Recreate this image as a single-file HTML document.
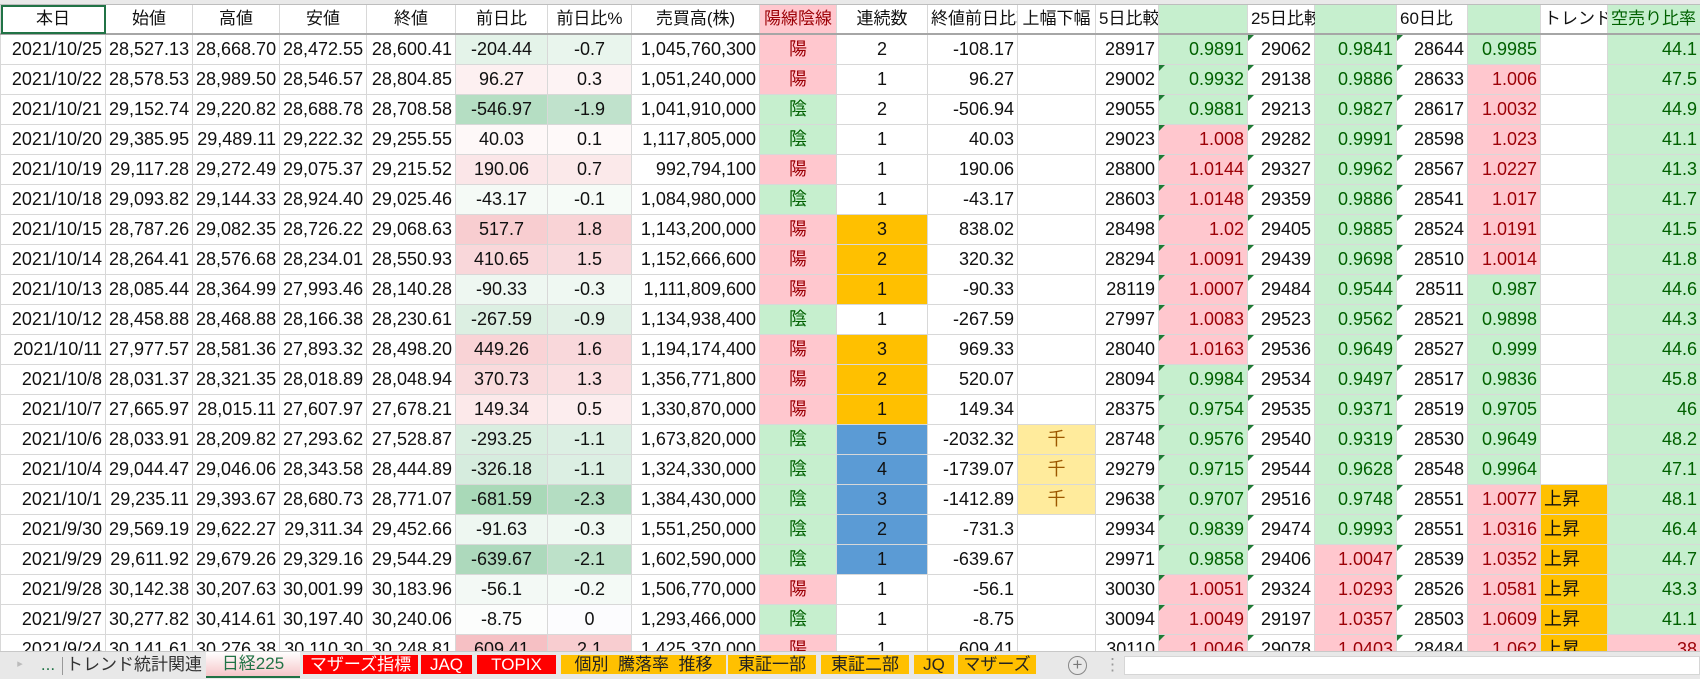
<!DOCTYPE html>
<html><head><meta charset="utf-8">
<style>
*{box-sizing:border-box;margin:0;padding:0}
body{width:1700px;height:679px;overflow:hidden;background:#fff;font-family:"Liberation Sans","Noto Sans CJK JP",sans-serif;font-size:18px;color:#111;position:relative}
.strip{position:absolute;left:0;top:0;width:1700px;height:5px;background:#e9e9e9;border-bottom:1px solid #bdbdbd}
table{position:absolute;left:0;top:5px;border-collapse:collapse;table-layout:fixed;width:1700px}
td{border:1px solid #d8d8d8;height:30px;padding:0 3px;text-align:right;white-space:nowrap;overflow:hidden;position:relative;line-height:28px}
tr.h td{height:29px;text-align:center;border-bottom:2px solid #a6a6a6;border-top:none;font-size:17px}
tr.h td.l{text-align:left;padding-left:3px}
.c{text-align:center!important}
.g{background:#c6efce;color:#006100}
.r{background:#ffc7ce;color:#9c0006}
.o{background:#ffc000;color:#111}
.b{background:#5b9bd5;color:#111}
.y{background:#ffeb9c;color:#9c5700;text-align:center}
.t::before{content:"";position:absolute;left:0;top:0;border-top:6px solid #1e7b34;border-right:6px solid transparent}
.sel{outline:2px solid #217346;outline-offset:-2px}
.tabs{position:absolute;left:0;top:651px;width:1700px;height:28px;background:#e8e8e8;border-top:1px solid #c8c8c8}
.tab{position:absolute;top:3px;height:19px;line-height:19px;font-size:17px;text-align:center;color:#333}
.red{background:#ff0000;color:#fff}
.org{background:#ffc000;color:#222}
</style></head><body>
<div class="strip"></div>
<table>
<colgroup><col style="width:105px"><col style="width:87px"><col style="width:87px"><col style="width:87px"><col style="width:89px"><col style="width:92px"><col style="width:84px"><col style="width:128px"><col style="width:77px"><col style="width:91px"><col style="width:90px"><col style="width:78px"><col style="width:63px"><col style="width:89px"><col style="width:67px"><col style="width:82px"><col style="width:71px"><col style="width:73px"><col style="width:67px"><col style="width:93px"></colgroup>
<tr class="h"><td class="sel">本日</td><td>始値</td><td>高値</td><td>安値</td><td>終値</td><td>前日比</td><td>前日比%</td><td>売買高(株)</td><td class="r">陽線陰線</td><td>連続数</td><td>終値前日比較</td><td>上幅下幅</td><td class="l">5日比較</td><td class="g"></td><td class="l" style="overflow:visible">25日比較</td><td class="g"></td><td class="l">60日比</td><td class="g"></td><td class="l">トレンド</td><td class="g l">空売り比率</td></tr>
<tr><td>2021/10/25</td><td>28,527.13</td><td>28,668.70</td><td>28,472.55</td><td>28,600.41</td><td class="c" style="background:#e4f3e9">-204.44</td><td class="c" style="background:#e9f5ed">-0.7</td><td>1,045,760,300</td><td class="r c">陽</td><td class="c">2</td><td>-108.17</td><td></td><td>28917</td><td class="g">0.9891</td><td class="t">29062</td><td class="g">0.9841</td><td class="t">28644</td><td class="g">0.9985</td><td></td><td class="g">44.1</td></tr>
<tr><td>2021/10/22</td><td>28,578.53</td><td>28,989.50</td><td>28,546.57</td><td>28,804.85</td><td class="c" style="background:#fdf0f1">96.27</td><td class="c" style="background:#fdf3f4">0.3</td><td>1,051,240,000</td><td class="r c">陽</td><td class="c">1</td><td>96.27</td><td></td><td>29002</td><td class="g t">0.9932</td><td class="t">29138</td><td class="g">0.9886</td><td class="t">28633</td><td class="r">1.006</td><td></td><td class="g">47.5</td></tr>
<tr><td>2021/10/21</td><td>29,152.74</td><td>29,220.82</td><td>28,688.78</td><td>28,708.58</td><td class="c" style="background:#b5dec3">-546.97</td><td class="c" style="background:#c0e2cc">-1.9</td><td>1,041,910,000</td><td class="g c">陰</td><td class="c">2</td><td>-506.94</td><td></td><td>29055</td><td class="g t">0.9881</td><td class="t">29213</td><td class="g">0.9827</td><td class="t">28617</td><td class="r">1.0032</td><td></td><td class="g">44.9</td></tr>
<tr><td>2021/10/20</td><td>29,385.95</td><td>29,489.11</td><td>29,222.32</td><td>29,255.55</td><td class="c" style="background:#fef8f8">40.03</td><td class="c" style="background:#fef9f9">0.1</td><td>1,117,805,000</td><td class="g c">陰</td><td class="c">1</td><td>40.03</td><td></td><td>29023</td><td class="r t">1.008</td><td class="t">29282</td><td class="g">0.9991</td><td class="t">28598</td><td class="r">1.023</td><td></td><td class="g">41.1</td></tr>
<tr><td>2021/10/19</td><td>29,117.28</td><td>29,272.49</td><td>29,075.37</td><td>29,215.52</td><td class="c" style="background:#fbe6e8">190.06</td><td class="c" style="background:#fbe9ea">0.7</td><td>992,794,100</td><td class="r c">陽</td><td class="c">1</td><td>190.06</td><td></td><td>28800</td><td class="r t">1.0144</td><td class="t">29327</td><td class="g">0.9962</td><td class="t">28567</td><td class="r">1.0227</td><td></td><td class="g">41.3</td></tr>
<tr><td>2021/10/18</td><td>29,093.82</td><td>29,144.33</td><td>28,924.40</td><td>29,025.46</td><td class="c" style="background:#f5faf6">-43.17</td><td class="c" style="background:#f6fbf7">-0.1</td><td>1,084,980,000</td><td class="g c">陰</td><td class="c">1</td><td>-43.17</td><td></td><td>28603</td><td class="r t">1.0148</td><td class="t">29359</td><td class="g">0.9886</td><td class="t">28541</td><td class="r">1.017</td><td></td><td class="g">41.7</td></tr>
<tr><td>2021/10/15</td><td>28,787.26</td><td>29,082.35</td><td>28,726.22</td><td>29,068.63</td><td class="c" style="background:#f8cdd0">517.7</td><td class="c" style="background:#f9d3d6">1.8</td><td>1,143,200,000</td><td class="r c">陽</td><td class="o c">3</td><td>838.02</td><td></td><td>28498</td><td class="r t">1.02</td><td class="t">29405</td><td class="g">0.9885</td><td class="t">28524</td><td class="r">1.0191</td><td></td><td class="g">41.5</td></tr>
<tr><td>2021/10/14</td><td>28,264.41</td><td>28,576.68</td><td>28,234.01</td><td>28,550.93</td><td class="c" style="background:#f9d7da">410.65</td><td class="c" style="background:#f9dadd">1.5</td><td>1,152,666,600</td><td class="r c">陽</td><td class="o c">2</td><td>320.32</td><td></td><td>28294</td><td class="r t">1.0091</td><td class="t">29439</td><td class="g">0.9698</td><td class="t">28510</td><td class="r">1.0014</td><td></td><td class="g">41.8</td></tr>
<tr><td>2021/10/13</td><td>28,085.44</td><td>28,364.99</td><td>27,993.46</td><td>28,140.28</td><td class="c" style="background:#eef7f1">-90.33</td><td class="c" style="background:#eff8f2">-0.3</td><td>1,111,809,600</td><td class="r c">陽</td><td class="o c">1</td><td>-90.33</td><td></td><td>28119</td><td class="r t">1.0007</td><td class="t">29484</td><td class="g">0.9544</td><td class="t">28511</td><td class="g">0.987</td><td></td><td class="g">44.6</td></tr>
<tr><td>2021/10/12</td><td>28,458.88</td><td>28,468.88</td><td>28,166.38</td><td>28,230.61</td><td class="c" style="background:#dcefe2">-267.59</td><td class="c" style="background:#e1f1e6">-0.9</td><td>1,134,938,400</td><td class="g c">陰</td><td class="c">1</td><td>-267.59</td><td></td><td>27997</td><td class="r t">1.0083</td><td class="t">29523</td><td class="g">0.9562</td><td class="t">28521</td><td class="g">0.9898</td><td></td><td class="g">44.3</td></tr>
<tr><td>2021/10/11</td><td>27,977.57</td><td>28,581.36</td><td>27,893.32</td><td>28,498.20</td><td class="c" style="background:#f9d3d6">449.26</td><td class="c" style="background:#f9d8db">1.6</td><td>1,194,174,400</td><td class="r c">陽</td><td class="o c">3</td><td>969.33</td><td></td><td>28040</td><td class="r t">1.0163</td><td class="t">29536</td><td class="g">0.9649</td><td class="t">28527</td><td class="g">0.999</td><td></td><td class="g">44.6</td></tr>
<tr><td>2021/10/8</td><td>28,031.37</td><td>28,321.35</td><td>28,018.89</td><td>28,048.94</td><td class="c" style="background:#f9dbdd">370.73</td><td class="c" style="background:#fadfe1">1.3</td><td>1,356,771,800</td><td class="r c">陽</td><td class="o c">2</td><td>520.07</td><td></td><td>28094</td><td class="g t">0.9984</td><td class="t">29534</td><td class="g">0.9497</td><td class="t">28517</td><td class="g">0.9836</td><td></td><td class="g">45.8</td></tr>
<tr><td>2021/10/7</td><td>27,665.97</td><td>28,015.11</td><td>27,607.97</td><td>27,678.21</td><td class="c" style="background:#fce9ea">149.34</td><td class="c" style="background:#fcedee">0.5</td><td>1,330,870,000</td><td class="r c">陽</td><td class="o c">1</td><td>149.34</td><td></td><td>28375</td><td class="g t">0.9754</td><td class="t">29535</td><td class="g">0.9371</td><td class="t">28519</td><td class="g">0.9705</td><td></td><td class="g">46</td></tr>
<tr><td>2021/10/6</td><td>28,033.91</td><td>28,209.82</td><td>27,293.62</td><td>27,528.87</td><td class="c" style="background:#d9eee0">-293.25</td><td class="c" style="background:#dcefe3">-1.1</td><td>1,673,820,000</td><td class="g c">陰</td><td class="b c">5</td><td>-2032.32</td><td class="y">千</td><td>28748</td><td class="g t">0.9576</td><td class="t">29540</td><td class="g">0.9319</td><td class="t">28530</td><td class="g">0.9649</td><td></td><td class="g">48.2</td></tr>
<tr><td>2021/10/4</td><td>29,044.47</td><td>29,046.06</td><td>28,343.58</td><td>28,444.89</td><td class="c" style="background:#d6ecde">-326.18</td><td class="c" style="background:#dcefe3">-1.1</td><td>1,324,330,000</td><td class="g c">陰</td><td class="b c">4</td><td>-1739.07</td><td class="y">千</td><td>29279</td><td class="g t">0.9715</td><td class="t">29544</td><td class="g">0.9628</td><td class="t">28548</td><td class="g">0.9964</td><td></td><td class="g">47.1</td></tr>
<tr><td>2021/10/1</td><td>29,235.11</td><td>29,393.67</td><td>28,680.73</td><td>28,771.07</td><td class="c" style="background:#a9d9b8">-681.59</td><td class="c" style="background:#b4ddc2">-2.3</td><td>1,384,430,000</td><td class="g c">陰</td><td class="b c">3</td><td>-1412.89</td><td class="y">千</td><td>29638</td><td class="g t">0.9707</td><td class="t">29516</td><td class="g">0.9748</td><td class="t">28551</td><td class="r">1.0077</td><td class="o" style="text-align:left">上昇</td><td class="g">48.1</td></tr>
<tr><td>2021/9/30</td><td>29,569.19</td><td>29,622.27</td><td>29,311.34</td><td>29,452.66</td><td class="c" style="background:#eef7f1">-91.63</td><td class="c" style="background:#eff8f2">-0.3</td><td>1,551,250,000</td><td class="g c">陰</td><td class="b c">2</td><td>-731.3</td><td></td><td>29934</td><td class="g t">0.9839</td><td class="t">29474</td><td class="g">0.9993</td><td class="t">28551</td><td class="r">1.0316</td><td class="o" style="text-align:left">上昇</td><td class="g">46.4</td></tr>
<tr><td>2021/9/29</td><td>29,611.92</td><td>29,679.26</td><td>29,329.16</td><td>29,544.29</td><td class="c" style="background:#add9bc">-639.67</td><td class="c" style="background:#bde1c9">-2.1</td><td>1,602,590,000</td><td class="g c">陰</td><td class="b c">1</td><td>-639.67</td><td></td><td>29971</td><td class="g t">0.9858</td><td class="t">29406</td><td class="r">1.0047</td><td class="t">28539</td><td class="r">1.0352</td><td class="o" style="text-align:left">上昇</td><td class="g">44.7</td></tr>
<tr><td>2021/9/28</td><td>30,142.38</td><td>30,207.63</td><td>30,001.99</td><td>30,183.96</td><td class="c" style="background:#f3f9f5">-56.1</td><td class="c" style="background:#f4faf6">-0.2</td><td>1,506,770,000</td><td class="r c">陽</td><td class="c">1</td><td>-56.1</td><td></td><td>30030</td><td class="r t">1.0051</td><td class="t">29324</td><td class="r">1.0293</td><td class="t">28526</td><td class="r">1.0581</td><td class="o" style="text-align:left">上昇</td><td class="g">43.3</td></tr>
<tr><td>2021/9/27</td><td>30,277.82</td><td>30,414.61</td><td>30,197.40</td><td>30,240.06</td><td class="c" style="background:#fcfdfc">-8.75</td><td class="c" style="background:#fcfcfe">0</td><td>1,293,466,000</td><td class="g c">陰</td><td class="c">1</td><td>-8.75</td><td></td><td>30094</td><td class="r t">1.0049</td><td class="t">29197</td><td class="r">1.0357</td><td class="t">28503</td><td class="r">1.0609</td><td class="o" style="text-align:left">上昇</td><td class="g">41.1</td></tr>
<tr><td>2021/9/24</td><td>30,141.61</td><td>30,276.38</td><td>30,110.30</td><td>30,248.81</td><td class="c" style="background:#f6c0c4">609.41</td><td class="c" style="background:#f8cdd0">2.1</td><td>1,425,370,000</td><td class="r c">陽</td><td class="c">1</td><td>609.41</td><td></td><td>30110</td><td class="r t">1.0046</td><td class="t">29078</td><td class="r">1.0403</td><td class="t">28484</td><td class="r">1.062</td><td class="o" style="text-align:left">上昇</td><td class="r">38</td></tr>
</table>
<div class="tabs">
<div class="tab" style="left:14px;width:12px;color:#bbb;font-size:11px">▸</div>
<div class="tab" style="left:38px;width:20px;color:#217346">...</div>
<div style="position:absolute;left:62px;top:5px;width:1px;height:18px;background:#999"></div>
<div class="tab" style="left:66px;width:136px">トレンド統計関連</div>
<div class="tab" style="left:206px;width:94px;background:linear-gradient(#fff,#f6c6c9);color:#217346;top:0;height:26px;line-height:24px;border-bottom:2px solid #217346">日経225</div>
<div class="tab red" style="left:303px;width:115px">マザーズ指標</div>
<div class="tab red" style="left:421px;width:51px">JAQ</div>
<div class="tab red" style="left:477px;width:79px">TOPIX</div>
<div class="tab org" style="left:561px;width:165px">個別&nbsp; 騰落率&nbsp; 推移</div>
<div class="tab org" style="left:728px;width:88px">東証一部</div>
<div class="tab org" style="left:821px;width:88px">東証二部</div>
<div class="tab org" style="left:914px;width:40px">JQ</div>
<div class="tab org" style="left:958px;width:78px">マザーズ</div>
<div style="position:absolute;left:1068px;top:4px;width:19px;height:19px;border:1.5px solid #888;border-radius:50%;text-align:center;line-height:15px;color:#777;font-size:17px">+</div>
<div class="tab" style="left:1104px;width:12px;color:#999">⋮</div>
<div style="position:absolute;left:1124px;top:4px;width:576px;height:19px;background:#fff;border:1px solid #d6d6d6"></div>
</div>
</body></html>
